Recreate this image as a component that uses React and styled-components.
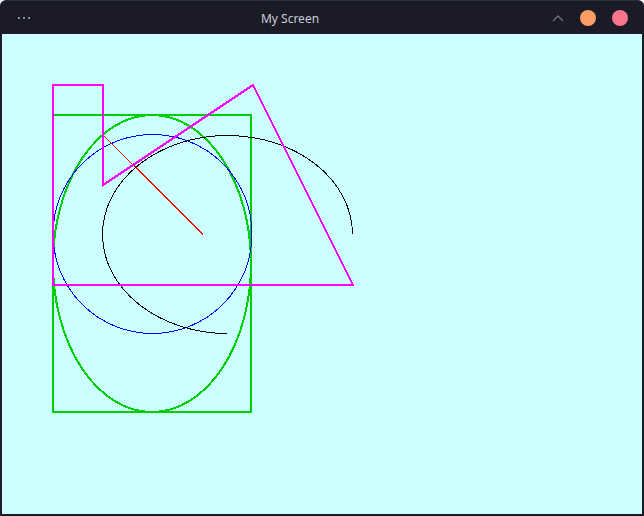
import React from "react";
import styled, { createGlobalStyle } from "styled-components";

const GlobalStyle = createGlobalStyle`
  html, body {
    margin: 0;
    padding: 0;
    background: #ffffff;
  }
`

const Window = styled.div`
  width: 644px;
  height: 516px;
  box-sizing: border-box;
  background-color: #1a1b26;
  border-radius: 6px 6px 0 0;
  border-top: 1px solid #2a2d40;
  display: flex;
  flex-direction: column;
  overflow: hidden;
`

const TitleBar = styled.div`
  height: 33px;
  display: flex;
  align-items: center;
  font-family: "Noto Sans", "DejaVu Sans", sans-serif;
`

const MenuDots = styled.div`
  width: 50px;
  padding-left: 18px;
  box-sizing: border-box;
  display: flex;
  gap: 3px;
  margin-top: 1px;
`

const Dot = styled.span`
  width: 2px;
  height: 2px;
  background-color: #8b8fa6;
`

const Title = styled.div`
  flex: 1;
  text-align: center;
  color: #c9cbd6;
  font-size: 12px;
  margin-top: 1px;
  margin-right: 22px;
`

const Controls = styled.div`
  display: flex;
  align-items: center;
  gap: 16px;
  padding-right: 16px;
  margin-top: 1px;
`

const Circle = styled.span`
  width: 16px;
  height: 16px;
  border-radius: 50%;
  background-color: ${props => props.color};
`

const Canvas = styled.div`
  margin: 0 2px 2px 2px;
  width: 640px;
  height: 480px;
  background-color: #ccffff;
`

function Chevron() {
  return (
    <svg width="12" height="8" viewBox="0 0 12 8">
      <polyline points="1,7 6,2 11,7" fill="none" stroke="#6e7288" strokeWidth="1.3" />
    </svg>
  );
}

function Drawing() {
  return (
    <svg width="640" height="480" viewBox="0 0 640 480" shapeRendering="crispEdges">
      <rect x="51" y="81" width="198" height="297" fill="none" stroke="#00d000" strokeWidth="2" />
      <ellipse cx="150" cy="229.5" rx="99" ry="148.5" fill="none" stroke="#00d000" strokeWidth="2" />
      <circle cx="150.5" cy="200" r="99.5" fill="none" stroke="#0000ff" strokeWidth="1" />
      <line x1="101" y1="101" x2="201" y2="200.5" stroke="#ff0000" strokeWidth="1.2" />
      <path d="M 350.5 200 A 125 99 0 1 0 225 299.5" fill="none" stroke="#000000" strokeWidth="1" />
      <polygon
        points="51,51 101,51 101,151 251,51 351,251 51,251"
        fill="none"
        stroke="#ff00ff"
        strokeWidth="2"
      />
    </svg>
  );
}

function App() {
  return (
    <>
      <GlobalStyle />
      <Window>
        <TitleBar>
          <MenuDots>
            <Dot />
            <Dot />
            <Dot />
          </MenuDots>
          <Title>My Screen</Title>
          <Controls>
            <Chevron />
            <Circle color="#ff9e64" />
            <Circle color="#f7768e" />
          </Controls>
        </TitleBar>
        <Canvas>
          <Drawing />
        </Canvas>
      </Window>
    </>
  );
}

export default App;
